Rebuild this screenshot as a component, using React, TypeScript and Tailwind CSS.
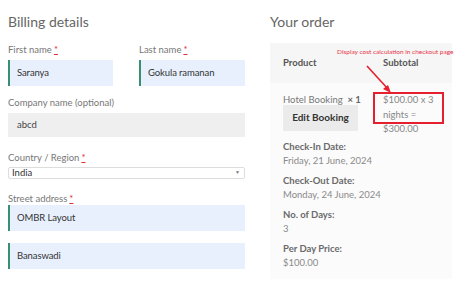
import React from "react";

const font = { fontFamily: "Lato, 'Open Sans', sans-serif" };

function Label({ text, req, mb = "mb-[4px]" }: { text: string; req?: boolean; mb?: string }) {
  return (
    <div className={`text-[9.5px] leading-[13px] text-[#777] ${mb}`}>
      {text}
      {req && <span className="text-[#d33] underline ml-[2px]">*</span>}
    </div>
  );
}

function Filled({ value }: { value: string }) {
  return (
    <div className="h-[26px] bg-[#e8f0fe] border-l-2 border-[#3a8f72] flex items-center pl-[7px] text-[9.5px] tracking-[-0.1px] text-[#333]">
      {value}
    </div>
  );
}

function Detail({ k, v }: { k: string; v: string }) {
  return (
    <div className="mb-[7px]">
      <div className="text-[9.5px] leading-[13px] font-bold text-[#6a6a6a]">{k}</div>
      <div className="text-[9.5px] leading-[13px] text-[#8a8a8a] mt-[1px]">{v}</div>
    </div>
  );
}

export default function App() {
  return (
    <div className="w-[474px] h-[282px] bg-white flex overflow-hidden" style={font}>
      <div className="w-[245px] pl-[8px] pt-[12px] shrink-0">
        <div className="text-[14px] leading-[20px] text-[#666] mb-[11px]">Billing details</div>
        <div className="flex gap-[26px]">
          <div className="w-[105px]">
            <Label text="First name" req />
            <Filled value="Saranya" />
          </div>
          <div className="w-[106px]">
            <Label text="Last name" req />
            <Filled value="Gokula ramanan" />
          </div>
        </div>
        <div className="mt-[10px]">
          <Label text="Company name (optional)" />
          <div className="h-[24px] bg-[#efefef] flex items-center pl-[9px] text-[9.5px] text-[#444]">abcd</div>
        </div>
        <div className="mt-[14px]">
          <Label text="Country / Region" req mb="mb-[3px]" />
          <div className="h-[12px] border border-[#ddd] rounded-[2px] flex items-center justify-between pl-[3px] pr-[4px] text-[9.5px] text-[#333]">
            <span>India</span>
            <span className="text-[5px] text-[#777]">▼</span>
          </div>
        </div>
        <div className="mt-[13px]">
          <Label text="Street address" req mb="mb-[0px]" />
          <Filled value="OMBR Layout" />
          <div className="mt-[12px]">
            <Filled value="Banaswadi" />
          </div>
        </div>
      </div>

      <div className="flex-1 pl-[25px] pt-[12px] relative">
        <div className="text-[14px] leading-[20px] text-[#666] mb-[11px]">Your order</div>
        <div className="w-[182px] h-[236px] bg-[#fbfbfb]">
          <div className="h-[40px] bg-[#f6f6f6] flex items-center pl-[13px] text-[9.5px] font-bold text-[#555]">
            <span className="w-[100px]">Product</span>
            <span>Subtotal</span>
          </div>
          <div className="flex pl-[13px] pt-[10px] text-[9.5px] leading-[14.5px] text-[#777]">
            <div className="w-[100px]">
              <div>Hotel Booking&nbsp; <span className="font-bold text-[#666]">× 1</span></div>
              <div className="w-[75px] h-[26px] bg-[#ebebeb] mt-[-3px] flex items-center justify-center font-bold text-[10px] text-[#333]">Edit Booking</div>
            </div>
            <div className="text-[#888]">
              <div>$100.00 x 3</div>
              <div>nights =</div>
              <div>$300.00</div>
            </div>
          </div>
          <div className="pl-[13px] mt-[3px]">
            <Detail k="Check-In Date:" v="Friday, 21 June, 2024" />
            <Detail k="Check-Out Date:" v="Monday, 24 June, 2024" />
            <Detail k="No. of Days:" v="3" />
            <Detail k="Per Day Price:" v="$100.00" />
          </div>
        </div>

        <div className="absolute left-[92px] top-[48px] text-[6.5px] leading-[8px] text-[#e8344a] whitespace-nowrap">
          Display cost calculation in checkout page
        </div>
        <div className="absolute left-[128px] top-[92px] w-[71px] h-[32px] border-2 border-[#e5202e]" />
        <svg className="absolute left-[116px] top-[60px]" width="40" height="40" viewBox="0 0 40 40">
          <line x1="6" y1="6" x2="27" y2="29" stroke="#e5202e" strokeWidth="1.6" />
          <polygon points="30,33 22,29 27,25" fill="#e5202e" />
        </svg>
      </div>
    </div>
  );
}
